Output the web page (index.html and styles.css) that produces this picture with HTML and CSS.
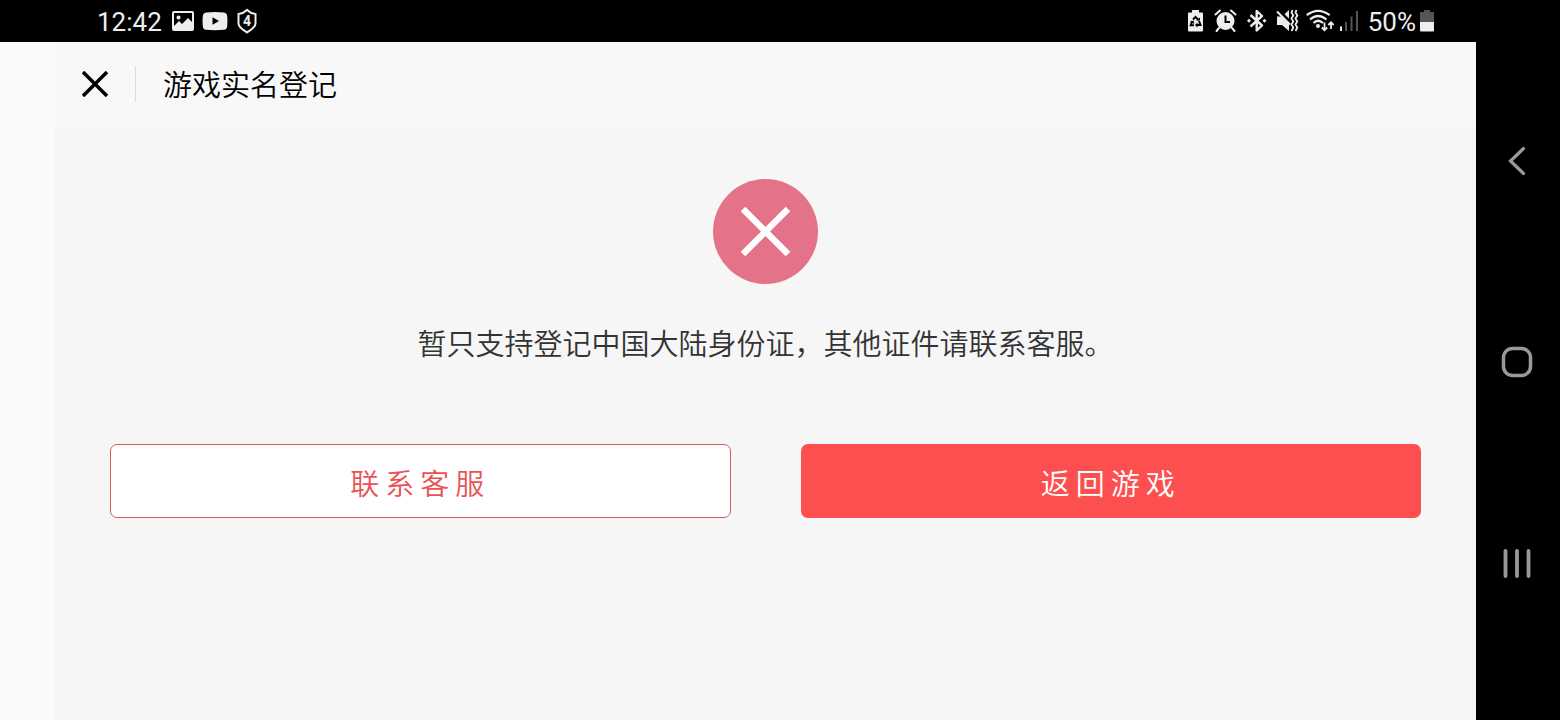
FILE: index.html
```html
<!DOCTYPE html>
<html lang="zh-CN">
<head>
    <meta charset="UTF-8">
    <meta name="viewport" content="width=device-width, initial-scale=1.0">
    <title>游戏实名登记</title>
    <link rel="stylesheet" href="styles.css">
</head>
<body>
    <div class="screen">
        <div class="status-bar">
            <div class="status-group">
                <span class="clock">12:42</span>
                <svg width="24" height="26" viewBox="0 0 24 26">
                    <rect x="3" y="4" width="20" height="18" rx="1" fill="none" stroke="#eee" stroke-width="2"/>
                    <path d="M4 18l5-5 3 3 6-6 5 5v7H4z" fill="#eee"/>
                    <circle cx="8.500" cy="9.500" r="2" fill="#eee"/>
                </svg>
                <svg width="26" height="26" viewBox="0 0 26 26">
                    <path d="M4 4.500Q13 3.500 22 4.500Q25 5 25.200 8Q25.700 13 25.200 18Q25 21.500 22 21.800Q13 22.600 4 21.800Q1 21.500 .8 18Q.3 13 .8 8Q1 5 4 4.500z" fill="#eee"/>
                    <path d="M10.500 9.300v7.400l6.500-3.700z" fill="#000"/>
                </svg>
                <svg width="22" height="26" viewBox="0 0 22 26">
                    <path d="M11 2C13 4 16 5.500 19.500 6v9.500c0 4-5 6.500-8.500 9-3.500-2.500-8.500-5-8.500-9V6C6 5.500 9 4 11 2z" fill="none" stroke="#eee" stroke-width="2"/>
                    <text x="11" y="18" class="badge-text">4</text>
                </svg>
            </div>
            <div class="status-group status-right">
                <svg width="22" height="26" viewBox="0 0 22 26">
                    <path d="M6 2h7v2.500h3a1 1 0 0 1 1 1v17a1 1 0 0 1-1 1H3a1 1 0 0 1-1-1v-17a1 1 0 0 1 1-1h3z" fill="#eee"/>
                    <path d="M7 11.500l2.500-2.500 2.500 2.500M13 13l1.500 4h-3.500M8 17.200H4.700L6.200 13" fill="none" stroke="#000" stroke-width="2"/>
                    <path d="M10 12.500h4V9.500zM11.500 14.500v5l-2.500-2.500zM4 13.700l3.500-1.200.8 3.500z" fill="#000"/>
                </svg>
                <svg width="26" height="26" viewBox="0 0 26 26">
                    <circle cx="11.500" cy="13" r="9" fill="#eee"/>
                    <path d="M1.500 6.500l4.500-4M17 2.500L21.500 6.500M5 20l-2.500 3M18 20l2.500 3" stroke="#eee" stroke-width="2" stroke-linecap="round"/>
                    <path d="M11.500 7.500V14H16" fill="none" stroke="#000" stroke-width="2"/>
                </svg>
                <svg width="24" height="26" viewBox="0 0 24 26">
                    <path d="M4.500 7L16 17.500l-5.300 5V3L16 8 4.500 18.500" fill="none" stroke="#eee" stroke-width="2.400" stroke-linejoin="round"/>
                    <path d="M1 12.800l2-2 2 2-2 2zM16.500 12.800l2-2 2 2-2 2z" fill="#eee"/>
                </svg>
                <svg width="24" height="26" viewBox="0 0 24 26">
                    <path d="M1 8.500h5l7-6.500v21L6 17H1z" fill="#eee"/>
                    <path d="M0 .5L14.500 15" stroke="#000" stroke-width="4"/>
                    <path d="M1 3.500L14 16.500" stroke="#eee" stroke-width="2"/>
                    <path d="M16.500 2l-1 2.500 1.800 3-1.800 3 1.800 3-1.800 3 1.800 3-1.800 3.500M20.500 2l-1 2.500 1.800 3-1.800 3 1.800 3-1.800 3 1.800 3-1.800 3.500" fill="none" stroke="#eee" stroke-width="1.800"/>
                </svg>
                <svg width="28" height="26" viewBox="0 0 28 26">
                    <path d="M.8 7.200Q12 -1.500 23.700 7.200M4 11.500Q12 4.500 20.500 11.500M7.500 15Q12 10.500 17 15" fill="none" stroke="#eee" stroke-width="2.200"/>
                    <circle cx="12" cy="18" r="2" fill="#eee"/>
                    <path d="M18.500 14.500V22M15.800 19.500l2.700 2.700 2.700-2.700M25 21v-7M22.300 17l2.700-2.700 2.700 2.700" fill="none" stroke="#eee" stroke-width="1.800"/>
                </svg>
                <svg width="22" height="26" viewBox="0 0 22 26">
                    <path d="M0 18.500h2V23H0z" fill="#eee"/>
                    <path d="M5 14h2v9H5zM10.500 8.500h2V23h-2zM16 3h2v20h-2z" fill="#555"/>
                </svg>
                <span class="battery">
                    <span>50%</span>
                    <svg width="14" height="26" viewBox="0 0 14 26">
                        <path d="M4 2h6v2h3a1 1 0 0 1 1 1v9H0V5a1 1 0 0 1 1-1h3z" fill="#555"/>
                        <path d="M0 14h14v8.500a1 1 0 0 1-1 1H1a1 1 0 0 1-1-1z" fill="#eee"/>
                    </svg>
                </span>
            </div>
        </div>

        <div class="page">
            <header class="header">
                <button type="button" class="icon-btn" aria-label="关闭">
                    <svg width="26" height="26" viewBox="0 0 26 26">
                        <path d="M1 1l24 24M25 1L1 25" stroke="#000" stroke-width="3.500"/>
                    </svg>
                </button>
                <span class="divider"></span>
                <h1>游戏实名登记</h1>
            </header>

            <main class="content">
                <svg class="error-icon" width="105" height="105" viewBox="0 0 105 105">
                    <circle cx="52.500" cy="52.500" r="52.500" fill="#e4738a"/>
                    <path d="M30 30l45 45M75 30l-45 45" stroke="#fff" stroke-width="6.500"/>
                </svg>
                <p class="message">暂只支持登记中国大陆身份证，其他证件请联系客服。</p>
                <div class="actions">
                    <button type="button" class="btn btn-outline">联系客服</button>
                    <button type="button" class="btn btn-primary">返回游戏</button>
                </div>
            </main>
        </div>
    </div>

    <nav class="nav-bar">
        <button type="button" class="icon-btn" aria-label="返回">
            <svg width="32" height="32" viewBox="0 0 32 32">
                <path d="M22.500 3.500L9.500 16l13 12.500" fill="none" stroke="#999" stroke-width="3.200" stroke-linecap="round"/>
            </svg>
        </button>
        <button type="button" class="icon-btn" aria-label="主屏幕">
            <svg width="32" height="32" viewBox="0 0 32 32">
                <rect x="2.500" y="2.500" width="27" height="27" rx="9" fill="none" stroke="#999" stroke-width="3.500"/>
            </svg>
        </button>
        <button type="button" class="icon-btn" aria-label="最近任务">
            <svg width="32" height="32" viewBox="0 0 32 32">
                <path d="M4.500 4v25M16 4v25M27.500 4v25" stroke="#999" stroke-width="3.800" stroke-linecap="round"/>
            </svg>
        </button>
    </nav>
</body>
</html>
```
FILE: styles.css
```css
body {
    display: flex;
    min-height: 100vh;
    margin: 0;
    background-color: #000;
    font-family: Roboto, 'Noto Sans CJK SC', sans-serif;
}

svg {
    display: block;
    flex-shrink: 0;
}

button {
    padding: 0;
    border: none;
    background: none;
    font-family: inherit;
    cursor: pointer;
}

.screen {
    flex: 1;
    display: flex;
    flex-direction: column;
}

/* status bar */
.status-bar {
    display: flex;
    align-items: center;
    justify-content: space-between;
    height: 42px;
    padding: 0 42px 0 97px;
    color: #eee;
    font-size: 26px;
    line-height: 42px;
}

.status-group {
    display: flex;
    align-items: center;
    gap: 8px;
}

.status-right {
    gap: 6px;
}

.battery {
    display: flex;
    align-items: center;
    gap: 4px;
}

.clock, .battery span {
    padding-top: 2px;
}

.badge-text {
    fill: #eee;
    font-size: 14px;
    font-weight: bold;
    text-anchor: middle;
}

/* page */
.page {
    flex: 1;
    border-left: 55px solid #fafafa;
    background-color: #f6f6f6;
    font-family: 'Noto Sans CJK SC', sans-serif;
    font-weight: 350;
}

.header {
    display: flex;
    align-items: center;
    gap: 27px;
    height: 84px;
    padding-left: 27px;
    background-color: #f8f8f8;
}

.divider {
    width: 1px;
    height: 36px;
    background-color: #ddd;
}

h1 {
    margin: 0;
    padding-bottom: 3px;
    color: #000;
    font-size: 29px;
    font-weight: inherit;
    line-height: 44px;
}

.content {
    padding: 53px 55px;
}

.error-icon {
    margin: 0 auto;
}

.message {
    margin: 36px 0 80px;
    color: #333;
    font-size: 29px;
    line-height: 44px;
    text-align: center;
}

.actions {
    display: grid;
    grid-template-columns: 1fr 1fr;
    gap: 70px;
}

.btn {
    height: 74px;
    padding-top: 2px;
    border-radius: 7px;
    font-size: 29px;
    font-weight: inherit;
    letter-spacing: 6px;
}

.btn-outline {
    border: 1px solid #d9595c;
    background-color: #fff;
    color: #eb5253;
}

.btn-primary {
    background-color: #fd4f50;
    color: #fff;
}

/* system navigation */
.nav-bar {
    display: grid;
    grid-template-rows: repeat(3, 1fr);
    width: 84px;
    padding: 61px 2px 57px 0;
    box-sizing: border-box;
}

.nav-bar .icon-btn {
    display: flex;
    align-items: center;
    justify-content: center;
}
```
